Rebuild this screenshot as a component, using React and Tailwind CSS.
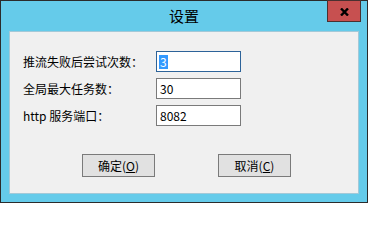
import React from "react";

const font = { fontFamily: '"Microsoft YaHei", "Noto Sans CJK SC", "Liberation Sans", sans-serif' };

function Field({ value, focused }) {
  return (
    <div
      className={`h-[21px] w-[85px] bg-white border flex items-center pl-[2px] text-[12px] text-black ${
        focused ? "border-[#2d6399]" : "border-[#7a7a7a]"
      }`}
    >
      {focused ? (
        <span className="bg-[#3399ff] text-white leading-[14px] px-[1px]">{value}</span>
      ) : (
        <span className="leading-[14px] pl-[1px]">{value}</span>
      )}
    </div>
  );
}

function Button({ label, hot }) {
  return (
    <button className="h-[23px] w-[73px] bg-[#e1e1e1] border border-[#7a7a7a] text-[12px] text-black flex items-center justify-center">
      {label}(<span className="underline">{hot}</span>)
    </button>
  );
}

export default function App() {
  return (
    <div
      style={font}
      className="relative w-[368px] h-[203px] bg-[#65cbea] border border-[#2b2b2b] flex flex-col"
    >
      <div className="h-[30px] flex items-center justify-center text-[15px] text-black">设置</div>
      <button className="absolute top-[-1px] right-[6px] w-[34px] h-[22px] bg-[#c75050] border border-[#4a3030] flex items-center justify-center pt-[2px]">
        <svg width="9" height="8" viewBox="0 0 9 8">
          <path d="M1 0.5 L8 7.5 M8 0.5 L1 7.5" stroke="#000" strokeWidth="2.4" />
        </svg>
      </button>
      <div className="flex-1 mx-[8px] mb-[8px] bg-[#f0f0f0] border border-[#a3c9d8] flex flex-col pt-[19px]">
        <div className="grid grid-cols-[133px_85px] gap-y-[6px] pl-[13px] items-center text-[12px] text-black">
          <span>推流失败后尝试次数：</span>
          <Field value="3" focused />
          <span>全局最大任务数：</span>
          <Field value="30" />
          <span>http 服务端口：</span>
          <Field value="8082" />
        </div>
        <div className="flex gap-[63px] pl-[72px] mt-[28px]">
          <Button label="确定" hot="O" />
          <Button label="取消" hot="C" />
        </div>
      </div>
    </div>
  );
}
